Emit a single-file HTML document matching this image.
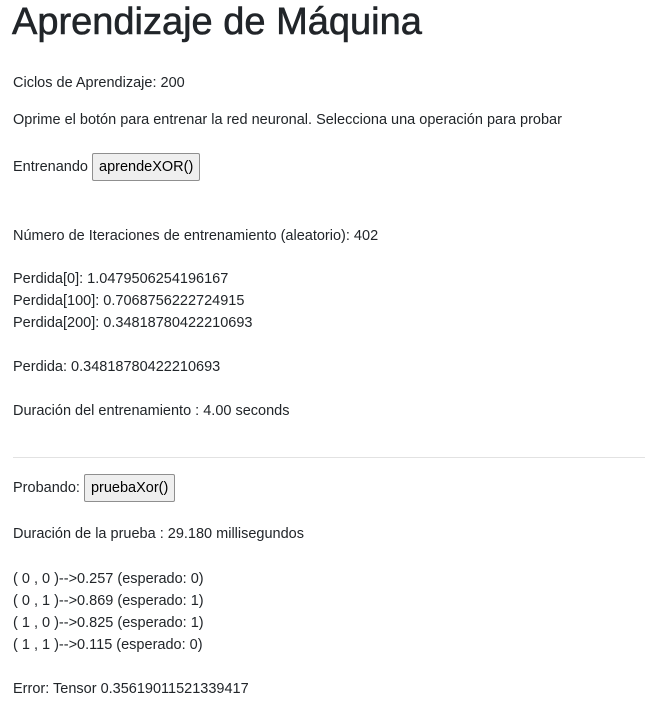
<!DOCTYPE html>
<html><head><meta charset="utf-8"><style>
body{margin:0;width:664px;height:712px;background:#fff;color:#212529;font-family:"Liberation Sans",sans-serif;font-size:14.5px;position:relative;overflow:hidden}
.l{position:absolute;left:13px;line-height:22px;white-space:nowrap;height:22px}
h1{position:absolute;left:12px;top:-2px;margin:0;font-weight:normal;font-size:38px;line-height:48px;white-space:nowrap;-webkit-text-stroke:0.6px #212529}
.b{display:inline-block;border:1px solid #8f8f8f;background:#efefef;border-radius:2px;padding:0 6px;height:26px;line-height:26px;vertical-align:baseline;color:#000}
hr{position:absolute;left:13px;top:457px;width:632px;margin:0;border:0;border-top:1px solid #e2e2e2}
</style></head><body>
<h1>Aprendizaje de Máquina</h1>
<div class="l" style="top:72px">Ciclos de Aprendizaje: 200</div>
<div class="l" style="top:109px">Oprime el botón para entrenar la red neuronal. Selecciona una operación para probar</div>
<div class="l" style="top:153px">Entrenando <span class="b">aprendeXOR()</span></div>
<div class="l" style="top:225px">Número de Iteraciones de entrenamiento (aleatorio): 402</div>
<div class="l" style="top:268px">Perdida[0]: 1.0479506254196167</div>
<div class="l" style="top:290px">Perdida[100]: 0.7068756222724915</div>
<div class="l" style="top:312px">Perdida[200]: 0.34818780422210693</div>
<div class="l" style="top:356px">Perdida: 0.34818780422210693</div>
<div class="l" style="top:400px">Duración del entrenamiento : 4.00 seconds</div>
<hr>
<div class="l" style="top:474px">Probando: <span class="b">pruebaXor()</span></div>
<div class="l" style="top:523px">Duración de la prueba : 29.180 millisegundos</div>
<div class="l" style="top:568px">( 0 , 0 )--&gt;0.257 (esperado: 0)</div>
<div class="l" style="top:590px">( 0 , 1 )--&gt;0.869 (esperado: 1)</div>
<div class="l" style="top:612px">( 1 , 0 )--&gt;0.825 (esperado: 1)</div>
<div class="l" style="top:634px">( 1 , 1 )--&gt;0.115 (esperado: 0)</div>
<div class="l" style="top:678px">Error: Tensor 0.35619011521339417</div>
</body></html>
